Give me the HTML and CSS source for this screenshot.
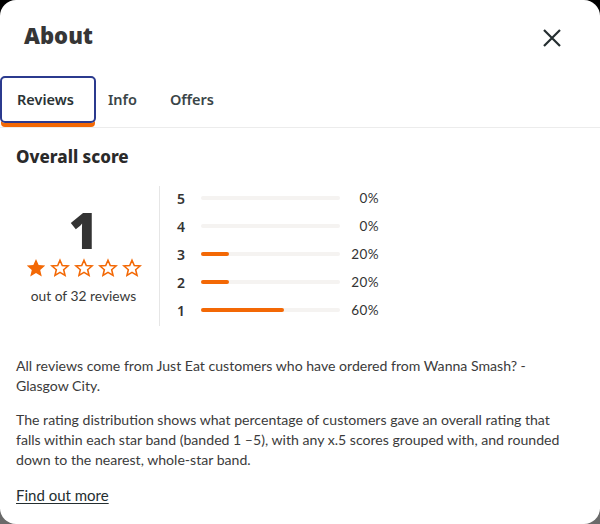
FILE: index.html
```html
<!DOCTYPE html>
<html>
<head>
<meta charset="utf-8">
<link rel="stylesheet" href="styles.css">
</head>
<body>
<div class="panel">
  <header class="head">
    <h1 class="title">About</h1>
    <button class="close" aria-label="Close">
      <svg width="20" height="20" viewBox="0 0 20 20"><path d="M2 2L18 18M18 2L2 18" stroke="#242e30" stroke-width="2.2" stroke-linecap="butt"/></svg>
    </button>
  </header>
  <nav class="tabs">
    <div class="tab active">Reviews</div>
    <div class="tab">Info</div>
    <div class="tab">Offers</div>
  </nav>
  <section class="content">
    <h2 class="subtitle">Overall score</h2>
    <div class="score">
      <div class="summary">
        <div class="big">1</div>
        <div class="stars">
          <svg viewBox="0 0 24 24" class="star"><path class="full" d="M12 2.2l2.9 6.6 7.2.6-5.5 4.7 1.7 7.1L12 17.4l-6.3 3.8 1.7-7.1L1.9 9.4l7.2-.6z"/></svg>
          <svg viewBox="0 0 24 24" class="star"><path class="empty" d="M12 3.5l2.5 5.8 6.3.5-4.8 4.1 1.5 6.2L12 16.8l-5.5 3.3 1.5-6.2-4.8-4.1 6.3-.5z"/></svg>
          <svg viewBox="0 0 24 24" class="star"><path class="empty" d="M12 3.5l2.5 5.8 6.3.5-4.8 4.1 1.5 6.2L12 16.8l-5.5 3.3 1.5-6.2-4.8-4.1 6.3-.5z"/></svg>
          <svg viewBox="0 0 24 24" class="star"><path class="empty" d="M12 3.5l2.5 5.8 6.3.5-4.8 4.1 1.5 6.2L12 16.8l-5.5 3.3 1.5-6.2-4.8-4.1 6.3-.5z"/></svg>
          <svg viewBox="0 0 24 24" class="star"><path class="empty" d="M12 3.5l2.5 5.8 6.3.5-4.8 4.1 1.5 6.2L12 16.8l-5.5 3.3 1.5-6.2-4.8-4.1 6.3-.5z"/></svg>
        </div>
        <div class="count">out of 32 reviews</div>
      </div>
      <div class="bars">
        <div class="row"><span class="num">5</span><span class="track"><span class="fill" style="width:0%"></span></span><span class="pct">0%</span></div>
        <div class="row"><span class="num">4</span><span class="track"><span class="fill" style="width:0%"></span></span><span class="pct">0%</span></div>
        <div class="row"><span class="num">3</span><span class="track"><span class="fill" style="width:20%"></span></span><span class="pct">20%</span></div>
        <div class="row"><span class="num">2</span><span class="track"><span class="fill" style="width:20%"></span></span><span class="pct">20%</span></div>
        <div class="row"><span class="num">1</span><span class="track"><span class="fill" style="width:60%"></span></span><span class="pct">60%</span></div>
      </div>
    </div>
    <p class="text">All reviews come from Just Eat customers who have ordered from Wanna Smash? - Glasgow City.</p>
    <p class="text">The rating distribution shows what percentage of customers gave an overall rating that falls within each star band (banded 1 –5), with any x.5 scores grouped with, and rounded down to the nearest, whole-star band.</p>
    <a class="more" href="#">Find out more</a>
  </section>
</div>
</body>
</html>
```
FILE: styles.css
```css
* { box-sizing: border-box; }
html, body { margin: 0; height: 100%; }
body {
  background: linear-gradient(#000 0%, #333 50%, #6b6b6b 100%);
  font-family: Lato, "Noto Sans", sans-serif;
  color: #242e30;
}
.panel {
  width: 600px;
  height: 524px;
  background: #fff;
  border-radius: 16px;
  overflow: hidden;
}
.head {
  display: flex;
  justify-content: space-between;
  align-items: flex-start;
  padding: 20px 38px 0 24px;
  height: 76px;
}
.title {
  margin: 0;
  font-family: "Noto Sans", sans-serif;
  font-weight: 900;
  font-size: 22px;
  line-height: 30px;
  color: #363636;
}
.close {
  border: 0;
  background: none;
  padding: 0;
  margin-top: 8px;
  width: 20px;
  height: 20px;
}
.close svg { display: block; }
.tabs {
  display: flex;
  border-bottom: 1px solid #ececec;
  height: 52px;
}
.tab {
  font-family: "Noto Sans", sans-serif;
  font-weight: 600;
  font-size: 14.5px;
  color: #3a4548;
  padding: 13px 12px 0;
  height: 47px;
}
.tab:nth-child(3) { padding-left: 21px; }
.tab.active {
  width: 96px;
  padding-left: 15px;
  padding-top: 11px;
  border: 2px solid #2b3a8e;
  border-radius: 5px;
  color: #2a3335;
  box-shadow: 0 5px 0 -1px #f36805;
}
.content { padding: 0 40px 0 16px; }
.subtitle {
  margin: 18px 0 0;
  font-family: "Noto Sans", sans-serif;
  font-weight: 800;
  font-size: 17px;
  line-height: 22px;
  color: #2a2a2a;
}
.score {
  display: flex;
  margin-top: 18px;
}
.summary {
  width: 144px;
  border-right: 1px solid #e6e6e6;
  display: flex;
  flex-direction: column;
  align-items: center;
  padding: 20px 8px 0 0;
  height: 140px;
}
.big {
  font-family: "Noto Sans", sans-serif;
  font-weight: 900;
  font-size: 50px;
  line-height: 48px;
  color: #333;
}
.stars { display: flex; gap: 2px; margin-top: 3px; }
.star { width: 22px; height: 22px; }
.star .full { fill: #f36805; }
.star .empty { fill: none; stroke: #f36805; stroke-width: 1.7; stroke-linejoin: miter; }
.count {
  font-size: 13.8px;
  color: #3a3a3a;
  margin-top: 8px;
}
.bars {
  padding-left: 17px;
  margin-top: -2px;
  display: flex;
  flex-direction: column;
}
.row {
  display: flex;
  align-items: center;
  height: 28px;
}
.num {
  width: 24px;
  font-family: "Noto Sans", sans-serif;
  font-weight: 600;
  font-size: 14px;
  color: #333;
}
.track {
  width: 139px;
  height: 4px;
  border-radius: 2px;
  background: #f5f3f1;
  display: block;
}
.fill {
  display: block;
  height: 4px;
  border-radius: 2px;
  background: #f36805;
}
.pct {
  width: 39px;
  text-align: right;
  font-size: 13.5px;
  color: #333;
  letter-spacing: 0.4px;
}
.text {
  margin: 30px 0 0;
  font-size: 14.1px;
  line-height: 20px;
  color: #3b3b3b;
}
.text + .text { margin-top: 14px; }
.more {
  display: inline-block;
  margin-top: 16px;
  font-size: 15px;
  color: #242e30;
  text-decoration: underline;
  text-underline-offset: 2px;
}
```
